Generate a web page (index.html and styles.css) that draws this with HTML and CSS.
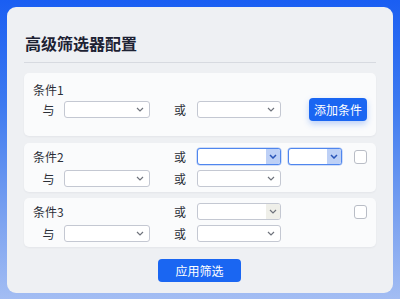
FILE: index.html
```html
<!DOCTYPE html>
<html lang="zh">
<head>
<meta charset="utf-8">
<link rel="stylesheet" href="styles.css">
</head>
<body>
<div class="panel">
  <h1 class="title">高级筛选器配置</h1>
  <div class="divider"></div>

  <section class="cond cond-first">
    <div class="cond-label">条件1</div>
    <div class="grid">
      <span class="op">与</span>
      <div class="sel sel-a"><svg class="chev" viewBox="0 0 8 5"><path d="M1 1l3 3 3-3"/></svg></div>
      <span class="op op-or">或</span>
      <div class="sel sel-b"><svg class="chev" viewBox="0 0 8 5"><path d="M1 1l3 3 3-3"/></svg></div>
      <button class="btn add">添加条件</button>
    </div>
  </section>

  <section class="cond">
    <div class="grid">
      <span class="cond-label span2">条件2</span>
      <span class="op op-or">或</span>
      <div class="sel sel-b focus"><span class="arrow"><svg class="chev" viewBox="0 0 8 5"><path d="M1 1l3 3 3-3"/></svg></span></div>
      <div class="sel sel-c focus"><span class="arrow"><svg class="chev" viewBox="0 0 8 5"><path d="M1 1l3 3 3-3"/></svg></span></div>
      <span class="check"></span>
      <span class="op">与</span>
      <div class="sel sel-a"><svg class="chev" viewBox="0 0 8 5"><path d="M1 1l3 3 3-3"/></svg></div>
      <span class="op op-or">或</span>
      <div class="sel sel-b"><svg class="chev" viewBox="0 0 8 5"><path d="M1 1l3 3 3-3"/></svg></div>
    </div>
  </section>

  <section class="cond">
    <div class="grid">
      <span class="cond-label span2">条件3</span>
      <span class="op op-or">或</span>
      <div class="sel sel-b hover"><span class="arrow"><svg class="chev" viewBox="0 0 8 5"><path d="M1 1l3 3 3-3"/></svg></span></div>
      <span class="empty"></span>
      <span class="check"></span>
      <span class="op">与</span>
      <div class="sel sel-a"><svg class="chev" viewBox="0 0 8 5"><path d="M1 1l3 3 3-3"/></svg></div>
      <span class="op op-or">或</span>
      <div class="sel sel-b"><svg class="chev" viewBox="0 0 8 5"><path d="M1 1l3 3 3-3"/></svg></div>
    </div>
  </section>

  <div class="actions">
    <button class="btn apply">应用筛选</button>
  </div>
</div>
</body>
</html>
```

FILE: styles.css
```css
* { box-sizing: border-box; }
html, body { margin: 0; padding: 0; }
body {
  width: 400px;
  height: 299px;
  overflow: hidden;
  padding: 7px 7px 6px 7px;
  background: linear-gradient(180deg, #1a5ef2 0%, #3d7af0 35%, #7ea4f0 75%, #a3bdf3 100%);
  font-family: "Noto Sans CJK SC", "Noto Sans", sans-serif;
  color: #2b2f38;
}
.panel {
  height: 286px;
  background: #eef0f3;
  border-radius: 9px;
  padding: 0 17px;
  display: flex;
  flex-direction: column;
}
.title {
  margin: 0;
  padding-top: 25px;
  height: 46px;
  font-size: 16px;
  line-height: 22px;
  font-weight: 700;
  color: #1d2233;
  padding-left: 1px;
}
.divider {
  height: 1px;
  background: #d7dae0;
  margin: 9px 0 10px;
}
.cond {
  background: #fafbfc;
  border-radius: 5px;
  box-shadow: 0 1px 2px rgba(30, 40, 60, 0.05);
  padding: 5px 9px 5px 9px;
  margin-bottom: 6px;
}
.cond-first {
  padding-top: 9px;
  padding-bottom: 15px;
  margin-bottom: 7px;
}
.cond-label {
  font-size: 12px;
  line-height: 16px;
  color: #2b2f38;
}
.grid {
  display: grid;
  grid-template-columns: 31px 86px 47px 84px 61px 25px;
  row-gap: 5px;
  align-items: center;
}
.span2 { grid-column: 1 / 3; }
.op {
  font-size: 12px;
  line-height: 17px;
  text-align: center;
  color: #2b2f38;
}
.op-or {
  text-align: right;
  padding-right: 11px;
}
.sel {
  position: relative;
  height: 17px;
  background: #fff;
  border: 1px solid #c4c8d2;
  border-radius: 3px;
  display: flex;
  justify-content: flex-end;
  align-items: center;
  padding-right: 5px;
}
.sel-a { width: 86px; }
.sel-b { width: 84px; }
.sel-c { width: 54px; margin-left: 7px; }
.chev {
  width: 8px;
  height: 5px;
  fill: none;
  stroke: #6f737c;
  stroke-width: 1.2;
}
.sel.focus, .sel.hover { padding-right: 0; }
.sel.focus {
  border-color: #4f86ee;
  box-shadow: 0 0 0 0.5px rgba(79, 134, 238, 0.5);
}
.arrow {
  width: 14px;
  height: 100%;
  display: flex;
  align-items: center;
  justify-content: center;
  border-radius: 0 2px 2px 0;
}
.focus .arrow { background: #bdd0f6; }
.focus .chev { stroke: #2a55b8; stroke-width: 1.5; }
.hover .arrow { background: #efefe9; }
.check {
  justify-self: end;
  width: 13px;
  height: 14px;
  background: #fff;
  border: 1px solid #b9bdc6;
  border-radius: 3px;
}
.empty { display: block; }
.btn {
  font-family: "Noto Sans CJK SC", "Noto Sans", sans-serif;
  font-size: 12px;
  color: #fff;
  background: #1a66f2;
  border: 0;
  border-radius: 4px;
  padding: 0;
  cursor: pointer;
}
.add {
  grid-column: 5 / 7;
  justify-self: end;
  width: 58px;
  height: 23px;
  box-shadow: 0 3px 6px rgba(26, 102, 242, 0.28);
}
.actions {
  display: flex;
  justify-content: center;
  margin-top: 6px;
}
.apply {
  width: 83px;
  height: 23px;
  margin-left: -1px;
}
```
